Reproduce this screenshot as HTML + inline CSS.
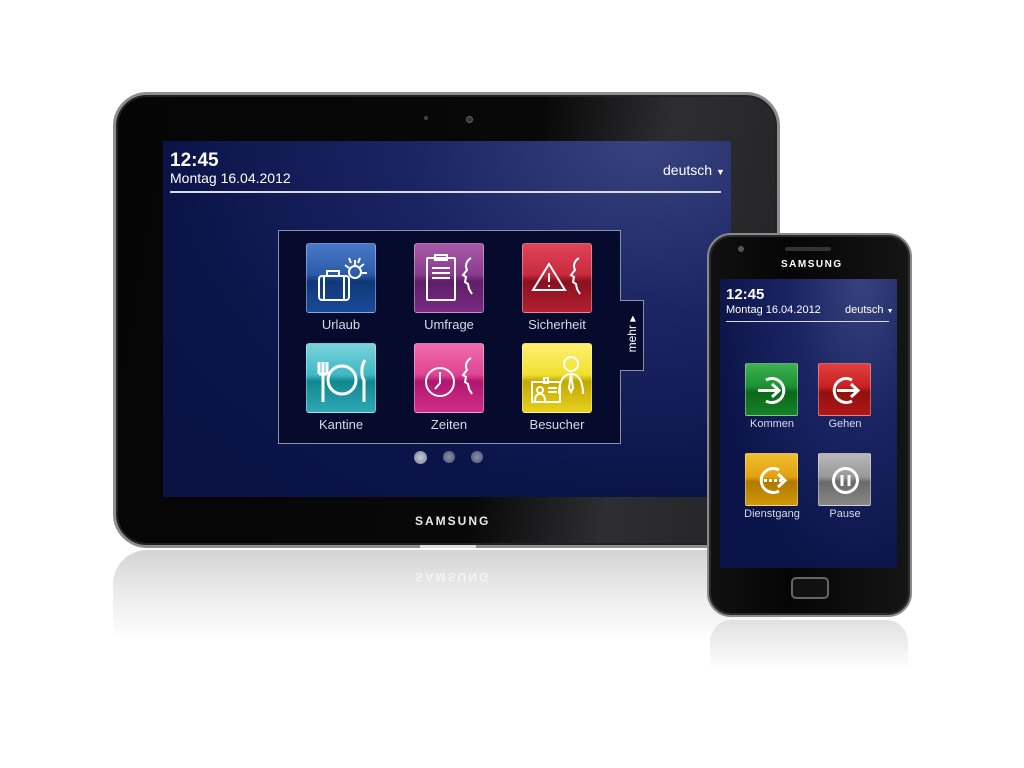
<!DOCTYPE html>
<html><head><meta charset="utf-8"><style>
*{margin:0;padding:0;box-sizing:border-box}
body{width:1024px;height:768px;background:#fff;position:relative;overflow:hidden;font-family:"Liberation Sans",Arial,sans-serif}
.abs{position:absolute}
.tab{left:113px;top:92px;width:667px;height:456px;border-radius:34px;background:linear-gradient(100deg,#050505 0%,#080808 58%,#2e2e32 76%,#222225 100%);border:3px solid #8d8d90;box-shadow:inset 0 0 0 2px #222}
.trefl{left:113px;top:550px;width:667px;height:90px;border-radius:34px 34px 0 0;background:linear-gradient(#d4d4d4,#e8e8e8 40%,#fff 100%)}
.tscr{left:163px;top:141px;width:568px;height:356px;background:radial-gradient(ellipse at 85% 0%,#38427e 0%,#1b2463 35%,#0b1448 70%,#0a1242 100%)}
.w{color:#fff}
.tile{position:absolute;width:70px;height:70px;border-radius:3px;border:1px solid rgba(255,255,255,.35)}
.lbl{position:absolute;width:110px;text-align:center;color:#d8dae6;font-size:13px}
.ptile{position:absolute;width:53px;height:53px;border-radius:2px;border:1px solid rgba(255,255,255,.35)}
.plbl{position:absolute;width:80px;text-align:center;color:#d8dae6;font-size:11px}
.phone{left:707px;top:233px;width:205px;height:384px;border-radius:24px;background:linear-gradient(90deg,#111,#050505 40%,#151515);border:2px solid #8a8a8a;box-shadow:inset 0 0 0 2px #2a2a2a}
.pscr{left:720px;top:279px;width:177px;height:289px;background:radial-gradient(ellipse at 80% 0%,#38427e 0%,#1b2463 35%,#0b1448 75%)}
</style></head><body>
<div class="abs trefl"></div>
<div class="abs w" style="left:415px;top:570px;font-size:12px;font-weight:bold;letter-spacing:2px;color:#f4f4f4;transform:scaleY(-1)">SAMSUNG</div>
<div class="abs tab"></div>
<div class="abs" style="left:424px;top:116px;width:4px;height:4px;border-radius:50%;background:#444"></div>
<div class="abs" style="left:466px;top:116px;width:7px;height:7px;border-radius:50%;background:#333;border:1px solid #666"></div>
<div class="abs w" style="left:415px;top:514px;font-size:12px;font-weight:bold;letter-spacing:2px;color:#e8e8e8">SAMSUNG</div>
<div class="abs" style="left:420px;top:545px;width:56px;height:3px;background:#ddd"></div>
<div class="abs tscr"></div>
<div class="abs w" style="left:170px;top:150px;font-size:19px;font-weight:bold">12:45</div>
<div class="abs w" style="left:170px;top:170px;font-size:14px">Montag 16.04.2012</div>
<div class="abs w" style="left:663px;top:162px;font-size:14px">deutsch <span style="font-size:9px">▼</span></div>
<div class="abs" style="left:170px;top:191px;width:551px;height:2px;background:#d8dae6"></div>
<div class="abs" style="left:278px;top:230px;width:343px;height:214px;border:1px solid #8a8fb0;background:#060a2c"></div>
<div class="abs" style="left:620px;top:300px;width:24px;height:71px;border:1px solid #8a8fb0;border-left:none;background:#060a2c"></div>
<div class="abs w" style="left:612px;top:327px;font-size:12px;transform:rotate(-90deg);width:40px;text-align:center">mehr ▸</div>

<div class="tile" style="left:306px;top:243px;background:linear-gradient(#4a78c8,#2a5aa8 45%,#103878 55%,#1a4a98)">
<svg width="70" height="70" viewBox="0 0 70 70" fill="none" stroke="#fff" stroke-width="2"><rect x="12" y="32" width="30" height="24" rx="3"/><rect x="20" y="27" width="12" height="5"/><line x1="17" y1="32" x2="17" y2="56"/><line x1="37" y1="32" x2="37" y2="56"/><circle cx="48" cy="28" r="6"/><path d="M48 16v5M57 20l-4 3M60 29h-5M38 21l4 3M42 14l2 5M53 14l-2 5"/></svg></div>
<div class="tile" style="left:414px;top:243px;background:linear-gradient(#a85aa8,#8a3a8e 45%,#5e1e68 55%,#7a2a82)">
<svg width="70" height="70" viewBox="0 0 70 70" fill="none" stroke="#fff" stroke-width="2"><rect x="12" y="14" width="28" height="42" rx="1"/><rect x="20" y="11" width="12" height="5"/><path d="M17 24h18M17 29h18M17 34h18"/><path d="M56 14c-5 3-6 8-4 12l-4 5 3 2-1 5 3 2 1 5 3 5"/></svg></div>
<div class="tile" style="left:522px;top:243px;background:linear-gradient(#e04458,#c82a3e 45%,#8a1020 55%,#b02030)">
<svg width="70" height="70" viewBox="0 0 70 70" fill="none" stroke="#fff" stroke-width="2"><path d="M26 20L10 46h32z"/><path d="M26 29v9M26 41v2"/><path d="M56 14c-5 3-6 8-4 12l-4 5 3 2-1 5 3 2 1 5 3 5"/></svg></div>
<div class="tile" style="left:306px;top:343px;background:linear-gradient(#7ad2dc,#40b8c4 45%,#108890 55%,#30a8b4)">
<svg width="70" height="70" viewBox="0 0 70 70" fill="none" stroke="#fff" stroke-width="3"><path d="M12 18v12M16 18v40M20 18v12M12 30h8"/><circle cx="35" cy="36" r="14"/><path d="M58 16c-4 6-4 16-1 20v22"/></svg></div>
<div class="tile" style="left:414px;top:343px;background:linear-gradient(#f06cac,#e04494 45%,#b01670 55%,#d02e88)">
<svg width="70" height="70" viewBox="0 0 70 70" fill="none" stroke="#fff" stroke-width="2"><circle cx="25" cy="38" r="14"/><path d="M25 28v11l-5 6"/><path d="M56 14c-5 3-6 8-4 12l-4 5 3 2-1 5 3 2 1 5 3 5"/></svg></div>
<div class="tile" style="left:522px;top:343px;background:linear-gradient(#fff070,#f0e030 45%,#c0a800 55%,#e8d020)">
<svg width="70" height="70" viewBox="0 0 70 70" fill="none" stroke="#fff" stroke-width="2"><circle cx="48" cy="20" r="7"/><path d="M36 50c0-12 4-20 12-20s12 8 12 20M48 30l-2 14 2 4 2-4z"/><rect x="9" y="38" width="28" height="20"/><circle cx="17" cy="46" r="3"/><path d="M12 57c0-5 2-7 5-7s5 2 5 7M25 44h9M25 48h9"/><rect x="21" y="34" width="4" height="5"/></svg></div>
<div class="lbl" style="left:286px;top:317px">Urlaub</div>
<div class="lbl" style="left:394px;top:317px">Umfrage</div>
<div class="lbl" style="left:502px;top:317px">Sicherheit</div>
<div class="lbl" style="left:286px;top:417px">Kantine</div>
<div class="lbl" style="left:394px;top:417px">Zeiten</div>
<div class="lbl" style="left:502px;top:417px">Besucher</div>
<div class="abs" style="left:414px;top:451px;width:13px;height:13px;border-radius:50%;background:radial-gradient(#c8c8d4,#7a7e98)"></div>
<div class="abs" style="left:443px;top:451px;width:12px;height:12px;border-radius:50%;background:radial-gradient(#8a8ea8,#4e5276)"></div>
<div class="abs" style="left:471px;top:451px;width:12px;height:12px;border-radius:50%;background:radial-gradient(#8a8ea8,#4e5276)"></div>

<div class="abs" style="left:710px;top:620px;width:198px;height:50px;border-radius:22px 22px 0 0;background:linear-gradient(#e0e0e0,#fff)"></div>
<div class="abs phone"></div>
<div class="abs" style="left:738px;top:246px;width:6px;height:6px;border-radius:50%;background:#555"></div>
<div class="abs" style="left:785px;top:247px;width:46px;height:4px;border-radius:2px;background:#333"></div>
<div class="abs w" style="left:781px;top:259px;font-size:10px;font-weight:bold;letter-spacing:1.5px">SAMSUNG</div>
<div class="abs pscr"></div>
<div class="abs w" style="left:726px;top:286px;font-size:15px;font-weight:bold">12:45</div>
<div class="abs w" style="left:726px;top:304px;font-size:11px">Montag 16.04.2012</div>
<div class="abs w" style="left:845px;top:304px;font-size:11px">deutsch <span style="font-size:7px">▼</span></div>
<div class="abs" style="left:726px;top:321px;width:163px;height:1px;background:#d8dae6"></div>
<div class="ptile" style="left:745px;top:363px;background:linear-gradient(#40b050,#1a9030 45%,#0a6a1a 55%,#148028)">
<svg width="53" height="53" viewBox="0 0 53 53" fill="none" stroke="#fff" stroke-width="3"><path d="M20 16a12 12 0 1 1 0 21"/><path d="M12 26.5h20M26 20l7 6.5-7 6.5"/></svg></div>
<div class="ptile" style="left:818px;top:363px;background:linear-gradient(#e04040,#c82020 45%,#901010 55%,#b01818)">
<svg width="53" height="53" viewBox="0 0 53 53" fill="none" stroke="#fff" stroke-width="3"><path d="M33 16a12 12 0 1 0 0 21"/><path d="M18 26.5h20M32 20l7 6.5-7 6.5"/></svg></div>
<div class="ptile" style="left:745px;top:453px;background:linear-gradient(#f0c030,#e0a010 45%,#b07800 55%,#d09808)">
<svg width="53" height="53" viewBox="0 0 53 53" fill="none" stroke="#fff" stroke-width="3"><path d="M33 16a12 12 0 1 0 0 21"/><path d="M18 26.5h20" stroke-dasharray="3 2"/><path d="M32 20l7 6.5-7 6.5"/></svg></div>
<div class="ptile" style="left:818px;top:453px;background:linear-gradient(#b8b8b8,#989898 45%,#6a6a6a 55%,#888)">
<svg width="53" height="53" viewBox="0 0 53 53" fill="none" stroke="#fff" stroke-width="3"><circle cx="26.5" cy="26.5" r="12"/><path d="M23 21v11M30 21v11"/></svg></div>
<div class="plbl" style="left:732px;top:418px">Kommen</div>
<div class="plbl" style="left:805px;top:418px">Gehen</div>
<div class="plbl" style="left:732px;top:508px">Dienstgang</div>
<div class="plbl" style="left:805px;top:508px">Pause</div>
<div class="abs" style="left:791px;top:577px;width:38px;height:22px;border-radius:5px;border:2px solid #666;background:#111"></div>
</body></html>
